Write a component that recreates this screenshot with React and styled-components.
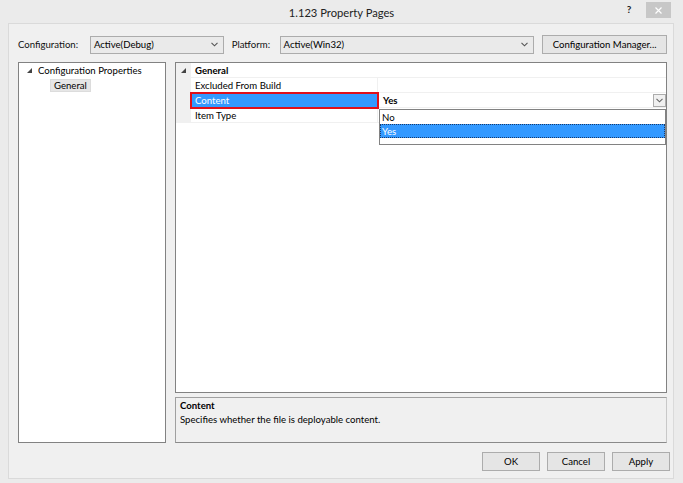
import React from "react";
import styled, { createGlobalStyle } from "styled-components";

const Global = createGlobalStyle`
  html, body { margin: 0; padding: 0; }
  body {
    background: #ebebeb;
    font-family: Lato, "Noto Sans", sans-serif;
    font-size: 9.6px;
    color: #000;
  }
`;

const Window = styled.div`
  width: 683px;
  height: 483px;
  box-sizing: border-box;
  display: flex;
  flex-direction: column;
  background: #ebebeb;
`;

const TitleBar = styled.div`
  height: 23px;
  display: grid;
  grid-template-columns: 1fr auto 1fr;
  align-items: start;
`;

const Title = styled.div`
  font-size: 11.2px;
  padding-top: 6px;
  color: #222;
  grid-column: 2;
`;

const TitleButtons = styled.div`
  grid-column: 3;
  display: flex;
  justify-content: flex-end;
  align-items: flex-start;
  padding-right: 12px;
`;

const HelpBtn = styled.div`
  width: 14px;
  font-weight: bold;
  font-size: 10px;
  padding-top: 3px;
  text-align: center;
  margin-right: 10px;
  color: #222;
`;

const CloseBtn = styled.div`
  width: 25px;
  height: 16px;
  margin-top: 2px;
  background: #c7c7c7;
  display: flex;
  align-items: center;
  justify-content: center;
`;

const Client = styled.div`
  margin: 0 9px 4px 8px;
  border: 1px solid #dadada;
  background: #f0f0f0;
  display: flex;
  flex-direction: column;
  padding: 11px 6px 7px 9px;
`;

const TopRow = styled.div`
  display: flex;
  align-items: center;
  height: 19px;
`;

const Label = styled.span`
  width: ${(p) => p.$w}px;
  white-space: nowrap;
  color: #111;
`;

const Select = styled.div`
  width: ${(p) => p.$w}px;
  height: 18px;
  box-sizing: border-box;
  border: 1px solid #acacac;
  background: #eaeaea;
  display: flex;
  align-items: center;
  justify-content: space-between;
  padding: 0 5px 0 3px;
  margin-right: ${(p) => p.$mr}px;
`;

const Chevron = ({ color = "#555" }) => (
  <svg width="7" height="5" viewBox="0 0 7 5">
    <path d="M0.5 0.8 L3.5 3.8 L6.5 0.8" fill="none" stroke={color} strokeWidth="1.1" />
  </svg>
);

const Button = styled.div`
  width: ${(p) => p.$w}px;
  height: 19px;
  box-sizing: border-box;
  border: 1px solid #acacac;
  background: #e5e5e5;
  display: flex;
  align-items: center;
  justify-content: center;
  white-space: nowrap;
`;

const Main = styled.div`
  margin-top: 8px;
  display: flex;
  gap: 9px;
  height: 381px;
`;

const Tree = styled.div`
  width: 148px;
  box-sizing: border-box;
  border: 1px solid #828282;
  background: #fff;
  padding: 0 0 0 8px;
`;

const TreeRow = styled.div`
  display: flex;
  align-items: center;
  height: 15px;
  white-space: nowrap;
  padding-left: ${(p) => p.$indent || 0}px;
`;

const Tri = styled.span`
  display: inline-block;
  width: 0;
  height: 0;
  border-left: 5px solid transparent;
  border-bottom: 5px solid #444;
  margin-right: ${(p) => p.$mr || 0}px;
`;

const Selected = styled.span`
  background: #e6e6e6;
  border: 1px solid #dcdcdc;
  padding: 0 3px;
  line-height: 11px;
`;

const Right = styled.div`
  width: 492px;
  display: flex;
  flex-direction: column;
  gap: 4px;
`;

const Grid = styled.div`
  height: 332px;
  box-sizing: border-box;
  border: 1px solid #828282;
  background: #fff;
  position: relative;
`;

const PRow = styled.div`
  display: grid;
  grid-template-columns: 15px 187px 1fr;
  height: 15px;
  box-sizing: border-box;
  border-bottom: 1px solid #f0f0f0;
`;

const Gutter = styled.div`
  background: #f0f0f0;
  display: flex;
  align-items: center;
  justify-content: center;
`;

const NameCell = styled.div`
  display: flex;
  align-items: center;
  padding-left: 4px;
  white-space: nowrap;
  font-weight: ${(p) => (p.$bold ? "bold" : "normal")};
  border-right: 1px solid ${(p) => (p.$header ? "transparent" : "#f0f0f0")};
`;

const ActiveNameCell = styled.div`
  display: flex;
  align-items: center;
  padding-left: 3px;
  margin: -1px -1px -2px -1px;
  background: #3399ff;
  color: #fff;
  border: 2px solid #e0101a;
  box-sizing: border-box;
  position: relative;
`;

const ValueCell = styled.div`
  display: flex;
  align-items: center;
  justify-content: space-between;
  padding: 0 0 0 5px;
  font-weight: ${(p) => (p.$bold ? "bold" : "normal")};
`;

const DropBtn = styled.div`
  width: 13px;
  height: 13px;
  box-sizing: border-box;
  border: 1px solid #acacac;
  background: #f0f0f0;
  display: flex;
  align-items: center;
  justify-content: center;
`;

const DropList = styled.div`
  position: absolute;
  left: 203px;
  top: 46px;
  width: 287px;
  height: 36px;
  box-sizing: border-box;
  border: 1px solid #828282;
  background: #fff;
`;

const Option = styled.div`
  height: 14px;
  box-sizing: border-box;
  padding-left: 1px;
  display: flex;
  align-items: center;
  background: ${(p) => (p.$sel ? "#3399ff" : "#fff")};
  color: ${(p) => (p.$sel ? "#fff" : "#000")};
  border: 1px dotted ${(p) => (p.$sel ? "#1a3a6a" : "transparent")};
`;

const Desc = styled.div`
  height: 46px;
  box-sizing: border-box;
  border: 1px solid #a0a0a0;
  border-right-color: #c8c8c8;
  border-bottom-color: #8a8a8a;
  background: #f0f0f0;
  padding: 1px 4px 0;
  line-height: 14px;
`;

const Bold = styled.div`
  font-weight: bold;
`;

const Footer = styled.div`
  display: flex;
  justify-content: flex-end;
  gap: 7px;
  margin: 9px -3px 0 0;
`;

export default function App() {
  return (
    <>
      <Global />
      <Window>
        <TitleBar>
          <Title>1.123 Property Pages</Title>
          <TitleButtons>
            <HelpBtn>?</HelpBtn>
            <CloseBtn>
              <svg width="7" height="7" viewBox="0 0 7 7">
                <path d="M0.5 0.5 L6.5 6.5 M6.5 0.5 L0.5 6.5" stroke="#fff" strokeWidth="1.2" />
              </svg>
            </CloseBtn>
          </TitleButtons>
        </TitleBar>
        <Client>
          <TopRow>
            <Label $w={72}>Configuration:</Label>
            <Select $w={134} $mr={8}>
              <span>Active(Debug)</span>
              <Chevron />
            </Select>
            <Label $w={48}>Platform:</Label>
            <Select $w={255} $mr={8}>
              <span>Active(Win32)</span>
              <Chevron />
            </Select>
            <Button $w={125}>Configuration Manager...</Button>
          </TopRow>
          <Main>
            <Tree>
              <TreeRow>
                <Tri $mr={6} />
                Configuration Properties
              </TreeRow>
              <TreeRow $indent={23}>
                <Selected>General</Selected>
              </TreeRow>
            </Tree>
            <Right>
              <Grid>
                <PRow>
                  <Gutter>
                    <Tri />
                  </Gutter>
                  <NameCell $bold $header>General</NameCell>
                  <ValueCell />
                </PRow>
                <PRow>
                  <Gutter />
                  <NameCell>Excluded From Build</NameCell>
                  <ValueCell />
                </PRow>
                <PRow>
                  <Gutter />
                  <ActiveNameCell>Content</ActiveNameCell>
                  <ValueCell $bold>
                    <span>Yes</span>
                    <DropBtn>
                      <Chevron color="#666" />
                    </DropBtn>
                  </ValueCell>
                </PRow>
                <PRow>
                  <Gutter />
                  <NameCell>Item Type</NameCell>
                  <ValueCell />
                </PRow>
                <DropList>
                  <Option>No</Option>
                  <Option $sel>Yes</Option>
                </DropList>
              </Grid>
              <Desc>
                <Bold>Content</Bold>
                <div>Specifies whether the file is deployable content.</div>
              </Desc>
            </Right>
          </Main>
          <Footer>
            <Button $w={58}>OK</Button>
            <Button $w={58}>Cancel</Button>
            <Button $w={58}>Apply</Button>
          </Footer>
        </Client>
      </Window>
    </>
  );
}
